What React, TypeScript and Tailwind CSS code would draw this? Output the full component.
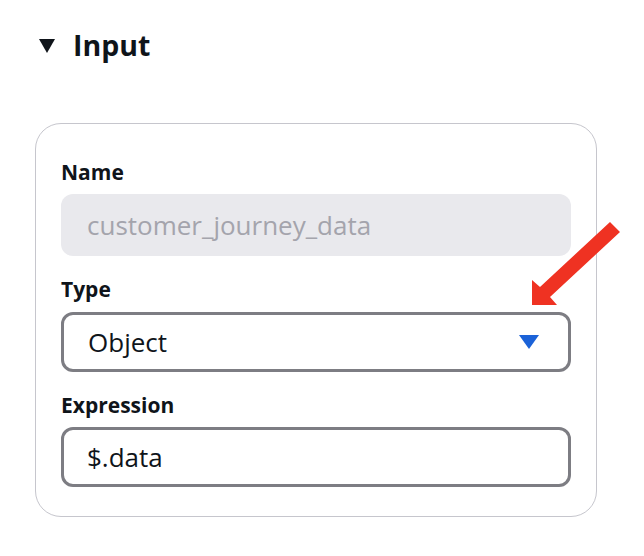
import React from "react";

function Field({ label, children, top }: { label: string; children: React.ReactNode; top: string }) {
  return (
    <div className={top}>
      <div className="text-[21px] leading-[28px] font-bold text-[#0f141a]">{label}</div>
      {children}
    </div>
  );
}

export default function App() {
  return (
    <div className="relative w-[644px] h-[556px] bg-white font-['Open_Sans',sans-serif] text-[#0f141a] pl-[35px] pt-[27px]">
      {/* section header */}
      <div className="flex items-center h-[36px]">
        <svg width="16" height="14" viewBox="0 0 16 14" className="ml-[4px] mt-[2px]">
          <polygon points="0,0 16,0 8,14" fill="#0f141a" />
        </svg>
        <h2 className="ml-[18px] text-[28.5px] leading-[36px] font-bold">Input</h2>
      </div>

      {/* card */}
      <div className="mt-[60px] w-[562px] border border-[#c6c6cd] rounded-[26px] px-[25px] pt-[34px] pb-[29px]">
        <Field label="Name" top="">
          <div className="mt-[8px] h-[62px] rounded-[12px] bg-[#e9e9ed] flex items-center pl-[26px] text-[26px] text-[#a4a4ac]">
            customer_journey_data
          </div>
        </Field>

        <Field label="Type" top="mt-[19px]">
          <div className="mt-[9px] h-[60px] rounded-[12px] border-[3px] border-[#7d7d83] flex items-center justify-between pl-[24px] pr-[29px] text-[26px]">
            <span>Object</span>
            <svg width="20" height="14" viewBox="0 0 20 14">
              <polygon points="0,0 20,0 10,14" fill="#1b62d8" />
            </svg>
          </div>
        </Field>

        <Field label="Expression" top="mt-[19px]">
          <div className="mt-[8px] h-[60px] rounded-[12px] border-[3px] border-[#7d7d83] flex items-center pl-[23px] text-[26px]">
            $.data
          </div>
        </Field>
      </div>

      {/* annotation arrow */}
      <svg className="absolute left-0 top-0 pointer-events-none" width="644" height="556">
        <polygon points="532,305 532,280 540,287 610,222 620,232 550,297 557,305" fill="#ef3222" />
      </svg>
    </div>
  );
}
